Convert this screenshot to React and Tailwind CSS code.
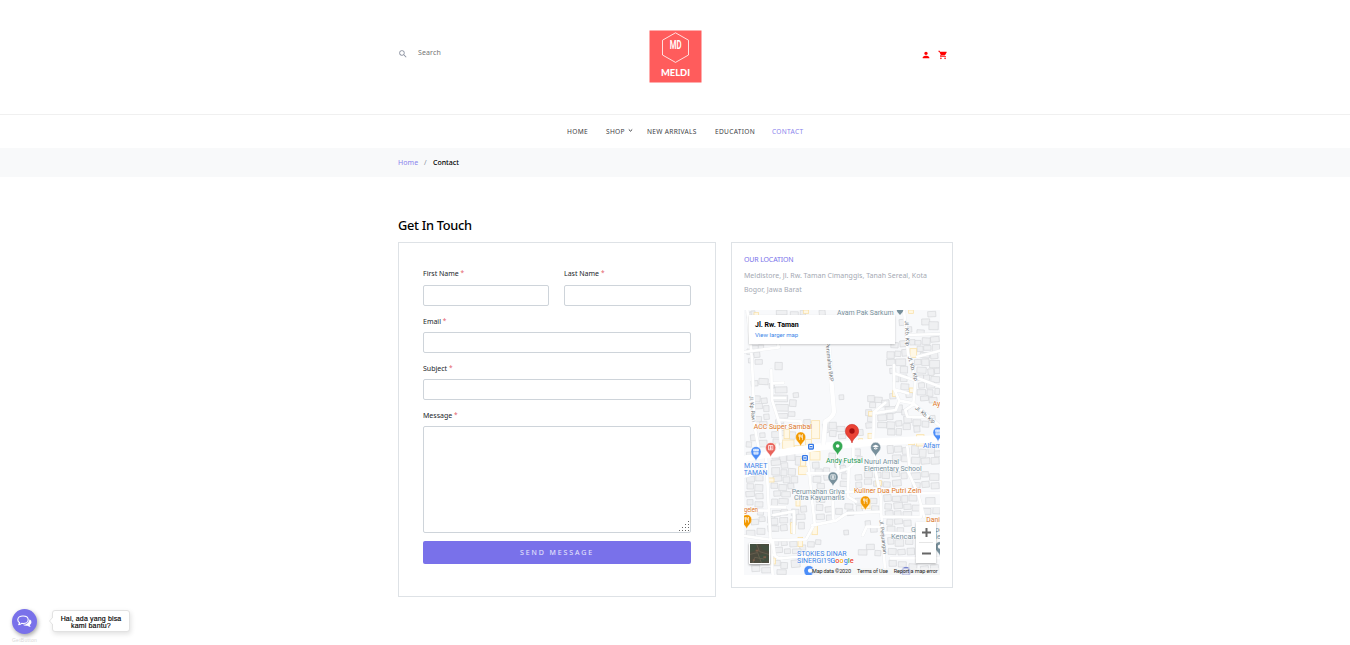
import React from "react";
import { MdSearch, MdPerson, MdShoppingCart } from "react-icons/md";

/* Building footprints: [x, y, width, height] */
const houses = [
  [8,8,14,16],[22,4,10,14],[98,2,30,12],[140,6,22,10],[170,2,14,12],[226,2,16,14],[552,6,22,14],[534,28,22,16],[556,36,26,22],[520,60,20,14],[466,30,18,16],[484,52,18,14],
  [24,108,18,14],[44,106,14,12],[10,118,22,14],[30,128,16,14],[14,146,12,12],[34,150,20,12],[94,158,20,20],
  [46,206,26,16],[22,214,18,14],[76,222,14,12],[94,232,34,16],[90,256,40,18],[30,258,18,16],[52,266,16,14],[34,282,20,14],[60,288,14,16],[96,284,36,18],[138,270,18,18],[148,250,14,12],
  [286,256,12,12],[102,312,28,12],[134,306,18,12],[34,320,18,14],[60,314,14,14],[48,336,20,12],[96,330,22,10],
  [430,126,20,18],[454,124,16,14],[474,120,18,18],[428,150,24,16],[456,148,28,18],[470,170,20,18],[442,98,20,14],[468,94,18,16],[438,176,16,14],[498,90,14,14],
  [514,92,16,12],[536,84,22,18],[560,82,24,14],[520,110,16,14],[540,108,20,12],[566,104,20,20],[530,128,26,14],[560,130,20,16],[512,150,18,14],[534,148,20,18],[558,152,28,20],[520,172,26,16],[552,178,16,18],[572,176,14,14],[514,196,24,14],[540,196,16,14],[562,200,24,16],[524,220,16,14],[548,218,22,16],[520,240,24,14],[550,240,16,18],[574,236,12,16],[530,260,22,12],[556,264,22,14],
  [372,258,18,16],[378,278,16,14],[394,262,20,14],[414,272,20,18],[438,252,16,14],[470,196,18,18],[448,198,16,16],[472,222,22,16],[486,246,18,16],[424,292,28,18],[456,286,18,20],[366,300,16,16],[372,320,16,14],[366,340,22,14],
  [402,316,24,16],[430,312,16,16],[402,338,26,14],[430,336,22,18],[456,334,16,14],[480,320,22,18],[478,342,20,16],[508,330,22,16],[536,334,18,16],[510,350,16,16],[554,318,18,18],[474,300,16,14],[432,358,20,16],[458,356,14,18],
  [236,344,14,24],[180,330,18,18],[256,338,20,18],[280,350,22,14],[258,362,18,16],[284,374,20,12],[340,360,16,16],[84,366,24,16],[112,362,20,14],[138,366,16,20],[20,376,18,16],[48,370,14,12],[46,392,22,18],[88,388,18,16],[8,396,14,14],
  [430,408,16,22],[452,410,20,16],[476,414,18,18],[504,408,18,24],[528,418,18,22],[552,410,18,20],[572,424,16,16],[446,436,24,14],[474,438,16,16],[504,442,24,18],[532,446,24,16],[562,444,22,18],[330,418,18,18],[340,440,14,14],[256,430,18,18],[272,456,26,16],
  [84,428,20,18],[108,434,18,20],[130,432,22,18],[156,440,16,24],[82,452,26,14],[112,460,18,14],[84,474,22,20],[112,480,16,16],[134,476,20,18],[88,500,24,14],[118,502,18,16],[142,500,18,18],[82,520,18,14],[106,524,22,16],[132,522,16,14],[90,544,18,14],[114,546,24,14],[84,568,16,18],[106,566,26,14],
  [8,428,12,16],[8,500,22,16],[36,496,20,16],[10,522,18,14],[34,524,22,18],[6,546,24,14],[36,552,20,14],[10,570,16,14],[34,576,22,14],[42,598,16,16],[22,630,20,14],[46,622,16,12],[8,662,24,18],[40,656,22,16],[72,620,20,18],[72,648,24,16],
  [206,458,18,16],[214,478,20,16],[208,500,22,16],[240,474,16,16],[240,496,14,14],[220,522,20,14],[290,468,14,18],[294,492,20,14],[290,514,26,14],[334,496,18,14],[336,518,16,14],[362,486,22,16],[392,488,18,14],[416,486,20,18],[444,486,22,14],[472,490,16,16],[362,508,20,14],[390,514,24,14],[420,516,18,14],[446,512,24,16],[502,490,26,18],[534,486,18,14],[558,492,26,18],[506,518,22,14],[534,516,20,16],[562,520,22,16],
  [86,602,22,16],[112,600,18,14],[144,598,20,18],[170,590,16,16],[82,626,18,18],[108,624,22,14],[140,628,16,16],[82,648,22,14],[110,646,18,16],[158,614,24,14],[164,638,16,18],[218,560,24,16],[218,584,18,16],[244,592,20,14],[218,614,22,14],[248,616,22,16],[276,596,18,16],[304,582,22,14],[310,602,18,14],[334,566,18,16],[338,588,16,16],[380,566,18,14],[384,588,20,12],
  [420,556,20,18],[446,560,22,14],[474,558,16,18],[496,556,22,16],[424,582,18,14],[450,580,24,16],[480,584,20,14],[546,564,26,20],[538,596,22,16],[568,592,20,18],[424,604,22,14],[452,604,18,16],[478,606,24,14],[506,586,20,16],[430,628,16,16],[452,628,22,14],[480,632,20,16],[430,650,22,16],[460,654,18,14],
  [86,690,18,14],[112,694,16,12],[138,696,20,14],[168,706,16,14],[192,696,18,14],[216,690,14,12],[92,714,22,14],[122,718,16,12],[146,718,24,12],[84,752,24,14],[112,758,18,16],[142,752,24,20],[24,768,22,16],[54,774,26,14],[100,780,26,12],[178,736,14,14],[364,634,14,16],[380,650,18,16],[368,704,22,14],[344,720,24,14],[394,722,16,14],[300,662,12,12],[432,684,16,18],[454,690,24,18],[486,686,20,16],[434,716,22,16],[462,720,20,14],[490,716,20,18],[436,752,20,16],[464,756,22,14],[496,762,22,14],[530,770,22,14],[560,766,22,16],
];

/* Commercial blocks shown in the warmer tone */
const shops = [[30,8,14,16],[178,0,16,10],[498,116,20,26],[494,0,14,10],[446,240,12,20],[496,234,16,14],[374,304,16,14],[203,332,24,54],[120,358,16,28],[116,390,34,26],[152,406,28,20],[184,388,18,18],[344,386,12,18],[372,370,14,16],[82,402,18,28],[198,424,30,26],[164,470,26,24],[170,446,14,22],[518,374,22,34],[494,388,18,16],[72,504,18,12],[396,512,16,14],[156,566,12,22],[140,638,14,32],[204,646,16,28],[162,682,14,28],[352,568,26,28],[78,744,16,18],[556,672,20,18],[26,700,20,12]];

const minorRoads = [
  "M10 0L24 150L32 350L42 405L45 438", "M0 126L105 112L102 104", "M82 180L84 270L108 345L110 395", "M84 220L118 218", "M88 264L124 264", "M108 330L170 334L172 398",
  "M252 96L264 235L270 306Q266 322 244 334L238 400", "M480 0L492 130L515 210L508 280", "M450 165L450 235L466 272L508 280L588 348", "M450 190L510 210", "M424 278L390 306L388 390", "M390 310L455 300L466 272",
  "M450 238L492 250", "M508 284L484 300L490 320L560 322", "M510 200L588 230", "M490 75L588 72", "M520 140L588 122",
  "M66 430L74 590L86 795", "M0 440L20 438", "M66 482L0 500", "M188 412L204 570L212 640L186 688L84 690L0 678", "M190 490L266 490L314 475L328 462V400", "M314 478L312 560L336 575", "M390 400L394 480L410 560L412 615L424 795",
  "M204 646L276 632L308 610L412 605", "M266 575L268 626", "M74 590L124 592M88 615L150 604V670", "M200 548L290 546L334 545", "M390 476L490 480L522 550L540 620", "M490 410L498 484", "M506 550L588 550", "M412 620L530 622V588H588", "M412 668L516 672", "M440 745H588", "M86 690L92 734Q98 748 122 744L185 738L206 795", "M20 720L86 735", "M356 676L368 650L410 650", "M280 420L282 490", "M0 600L72 602", "M390 538L508 538", "M100 404L102 432",
];

function Pin({ x, y, color, children, s = 1.08 }) {
  return (
    <g transform={`translate(${x} ${y}) scale(${s})`}>
      <path d="M0 26C-3 15-14 12-14 0A14 14 0 0 1 14 0C14 12 3 15 0 26Z" fill={color} stroke="#fff" strokeWidth="1.2" />
      {children}
    </g>
  );
}

const Fork = () => <path d="M-5-7V-2Q-5 1-3 1V8M-3-7V0M-1-7V-1Q-1 1-3 1M5 8V-7Q1-5 2 1H5" fill="none" stroke="#fff" strokeWidth="1.8" />;
const Shop = () => <path d="M-7-7H7V-2H-7ZM-6 0V7H6V0M-2-7V-2M3-7V-2" fill="#fff" fillOpacity=".65" stroke="#fff" strokeWidth="1.6" />;
const Civic = () => <path d="M-6-6H6V6H-6ZM-3-2H3M-3 2H3M0-6V6" fill="none" stroke="#fff" strokeWidth="2" />;

function T({ x, y, w, c = "#78909c", children, size = 20.5, ...rest }) {
  return (
    <text x={x} y={y} textLength={w} lengthAdjust="spacingAndGlyphs" fill={c} fontSize={size} fontWeight="400" stroke="#fff" strokeWidth="2.5" paintOrder="stroke" strokeLinejoin="round" {...rest}>
      {children}
    </text>
  );
}

function MapDrawing() {
  return (
    <svg viewBox="0 0 588 795" className="block h-[265px] w-[196px] font-['Roboto',sans-serif]">
      <rect width="588" height="795" fill="#f8f9fb" />
      <g fill="#eff0f2" stroke="#d5d7da" strokeWidth="2">
        {houses.map(([x, y, w, h], i) => (
          <rect key={i} x={x - 1} y={y - 1} width={w + 2} height={h + 2} transform={`rotate(${(i % 5) * 2 - 5} ${x} ${y})`} />
        ))}
      </g>
      <g fill="#fff8e6" stroke="#fae0a4" strokeWidth="2.2">
        {shops.map(([x, y, w, h], i) => (
          <rect key={i} x={x} y={y} width={w} height={h} />
        ))}
      </g>
      <g fill="none" strokeLinejoin="round" strokeLinecap="round">
        <path d={minorRoads.join("")} stroke="#e9ebed" strokeWidth="10" />
        <path d={minorRoads.join("")} stroke="#fff" strokeWidth="8" />
        <path d="M70 434L238 409L380 397L588 386" stroke="#fff" strokeWidth="22" />
        <path d="M0 447L70 434" stroke="#fff" strokeWidth="18" />
        <path d="M252 90L264 235L270 306Q266 322 244 334L238 400" stroke="#eceef0" strokeWidth="15" />
        <path d="M252 90L264 235L270 306Q266 322 244 334L238 404" stroke="#fff" strokeWidth="13" />
      </g>

      <T x="279" y="14" w="170">Ayam Pak Sarkum</T>
      <path d="M458 0H478Q478 7 468 15Q458 7 458 0" fill="#78909c" />
      <T x="0" y="0" w="76" size="16" c="#70757a" transform="translate(482 32) rotate(87)">Jl. Kb. Klp</T>
      <T x="0" y="0" w="76" size="16" c="#70757a" transform="translate(491 140) rotate(74)">Jl. Kb. Klp</T>
      <T x="0" y="0" w="72" size="16" c="#70757a" transform="translate(512 296) rotate(39)">Jl. Kb. Klp</T>
      <T x="0" y="0" w="78" size="16" c="#70757a" transform="translate(16 258) rotate(84)">Jl. Kp. Rawi</T>
      <T x="0" y="0" w="118" size="16" c="#70757a" transform="translate(245 98) rotate(84)">Perumahan BKP</T>
      <T x="0" y="0" w="102" size="16" c="#70757a" transform="translate(406 631) rotate(83)">Jl. Perjuangan</T>

      <Pin x="170" y="381" color="#f29900"><Fork /></Pin>
      <Pin x="80" y="413" color="#e9635b"><Civic /></Pin>
      <Pin x="36" y="425" color="#4b8df8"><Shop /></Pin>
      <Pin x="281" y="408" color="#34a853"><circle r="5" fill="#fff" /></Pin>
      <Pin x="395" y="412" color="#78909c"><path d="M-9-3L0-7L9-3L0 1ZM-5 1V4Q0 8 5 4V1L0 3Z" fill="#fff" /></Pin>
      <Pin x="267" y="501" color="#78909c"><Civic /></Pin>
      <Pin x="364" y="573" color="#f29900"><Fork /></Pin>
      <Pin x="8" y="629" color="#f29900"><Fork /></Pin>
      <Pin x="582" y="367" color="#4b8df8"><Shop /></Pin>
      <Pin x="588" y="710" color="#78909c"><circle r="6" fill="#fff" /></Pin>
      <Pin x="195" y="782" color="#4b8df8"><circle cx="3" r="6" fill="#fff" /></Pin>
      <Pin x="486" y="785" color="#6977c8"><Civic /></Pin>
      <g fill="#fff" stroke="#3579e8" strokeWidth="4">
        <rect x="194" y="403" width="14" height="14" rx="2" /><path d="M197 410H205" />
        <rect x="176" y="437" width="14" height="14" rx="2" /><path d="M179 444H187" />
      </g>
      <path d="M324 399C320 382 304 380 304 363A20 20 0 0 1 344 363C344 380 328 382 324 399Z" fill="#ea4335" stroke="#c5221f" strokeWidth="1.5" />
      <circle cx="324" cy="363" r="8" fill="#a50e0e" />

      <T x="29" y="357" w="175" c="#dc761f">ACC Super Sambal</T>
      <T x="566" y="289" c="#dc761f">Ayam</T>
      <T x="537" y="415" c="#4081e8">Alfamart</T>
      <T x="246" y="458" w="110" c="#239451">Andy Futsal</T>
      <T x="360" y="461" w="105">Nurul Amal</T>
      <T x="360" y="482" w="173">Elementary School</T>
      <T x="0" y="474" w="70" c="#4081e8">MARET</T>
      <T x="-1" y="494" w="71" c="#4081e8">TAMAN</T>
      <T x="143" y="551" w="159">Perumahan Griya</T>
      <T x="150" y="571" w="152">Citra Kayumanis</T>
      <T x="330" y="549" w="202" c="#dc761f">Kuliner Dua Putri Zein</T>
      <T x="0" y="605" w="42" c="#dc761f">gelen</T>
      <T x="547" y="637" c="#dc761f">Dania</T>
      <T x="501" y="666">Griya</T>
      <T x="441" y="686" w="86">Kencana</T>
      <T x="574" y="666">pe</T>
      <T x="574" y="686">le</T>
      <T x="159" y="739" w="149" c="#3c7fe5">STOKIES DINAR</T>
      <T x="159" y="760" w="102" c="#3c7fe5">SINERGI19</T>
      <text x="259" y="760" textLength="70" lengthAdjust="spacingAndGlyphs" fontSize="23" fontWeight="500" stroke="#fff" strokeWidth="3" paintOrder="stroke">
        <tspan fill="#4285f4">G</tspan><tspan fill="#ea4335">o</tspan><tspan fill="#f9ab00">o</tspan><tspan fill="#4285f4">g</tspan><tspan fill="#34a853">l</tspan><tspan fill="#ea4335">e</tspan>
      </text>
      <rect x="203" y="774" width="385" height="21" fill="#f5f5f5" fillOpacity=".6" />
      <g fill="#222" fontSize="16.5">
        <text x="204" y="789" textLength="117">Map data ©2020</text>
        <text x="339" y="789" textLength="93">Terms of Use</text>
        <text x="449" y="789" textLength="132">Report a map error</text>
      </g>
    </svg>
  );
}

function LocationMap() {
  return (
    <div className="relative mt-[13px] h-[265px] w-[196px] overflow-hidden font-['Roboto',sans-serif]">
      <MapDrawing />
      <div className="absolute left-[5px] top-[5px] h-[29px] w-[146px] bg-white pl-[6px] pt-[6px] shadow-[0_1px_2px_rgba(0,0,0,0.2)]">
        <div className="text-[7px] font-bold leading-[9px] text-black">Jl. Rw. Taman</div>
        <div className="mt-[1px] text-[6px] leading-[8px] text-[#3b86e8]">View larger map</div>
      </div>
      <div className="absolute left-[172px] top-[212px] h-[41px] w-[20px] bg-white shadow-[0_1px_2px_rgba(0,0,0,0.3)]">
        <svg viewBox="0 0 20 41" className="h-[41px] w-[20px]">
          <path d="M6 10.5H15M10.5 6V15M6 31.5H15" stroke="#666" strokeWidth="2" />
          <path d="M3 20.5H17" stroke="#e6e6e6" />
        </svg>
      </div>
      <svg viewBox="0 0 20 20" className="absolute left-[5px] top-[233px] h-[21px] w-[21px] border border-white bg-[#4c4b3e] shadow-[0_1px_2px_rgba(0,0,0,0.4)]">
        <path d="M0 0H8L5 7L0 9ZM11 0L20 2V8L13 6ZM8 12L18 10L20 17L11 20Z" fill="#435040" />
        <path d="M7 0L10 8L20 11M0 11L8 9L12 20M3 20L5 14L15 16" fill="none" stroke="#665f4e" strokeWidth="1" />
        <path d="M6 6H9V8H6ZM14 13H17V15H14ZM3 16H5V18H3Z" fill="#7a5c49" />
      </svg>
    </div>
  );
}

function Field({ label, labelClass = "", children }) {
  return (
    <label className="block min-w-0">
      <span className={`block h-[16px] text-[7px] leading-[10px] text-[#212529] ${labelClass}`}>
        {label} <span className="relative -top-px text-[6.5px] text-[#e4606d]">*</span>
      </span>
      {children}
    </label>
  );
}

const inputClass = "block h-[21px] w-full rounded-[2px] border border-[#ced4da] bg-white px-2 text-[7px] outline-none";

export default function App() {
  return (
    <div className="relative h-[645px] w-full overflow-hidden bg-white font-['Noto_Sans',sans-serif] text-black">
      <header>
        <div className="ml-[398px] flex h-[114px] w-[555px]">
          <div className="flex w-[251px] pt-[46px]">
            <MdSearch className="mt-[3px] size-[10px] text-[#8c92a0]" />
            <span className="ml-[10px] mt-[1px] text-[7px] leading-[12px] tracking-[0.12px] text-[#757575]">Search</span>
          </div>
          <svg viewBox="0 0 53 53" className="mt-[30px] h-[53px] w-[53px]">
            <rect x=".5" y=".5" width="52" height="52" fill="#ff5c5c" />
            <path d="M26.5 2.8L39.5 10.2V25L26.5 32.4L13.5 25V10.2Z" fill="none" stroke="#fff" strokeWidth=".8" />
            <text x="20.8" y="19" textLength="11.8" lengthAdjust="spacingAndGlyphs" fontSize="12" fontWeight="600" fill="#fff" fontFamily="Roboto, sans-serif">MD</text>
            <text x="12" y="46" textLength="29" lengthAdjust="spacingAndGlyphs" fontSize="9" fontWeight="900" fill="#fff" fontFamily="Lato, sans-serif">MELDI</text>
          </svg>
          <div className="ml-auto flex gap-[7px] pr-[5px] pt-[50px] text-[#f00]">
            <MdPerson className="size-[10px]" />
            <MdShoppingCart className="size-[10px]" />
          </div>
        </div>
        <nav className="flex h-[34px] border-t border-[#f0f0f0] pl-[567px] pt-[11px] text-[6.6px] leading-[11px] tracking-[0.3px] text-[#404145]">
          <a className="w-[39px]">HOME</a>
          <a className="flex w-[41px]">
            SHOP
            <svg viewBox="0 0 5 5" className="ml-[3px] mt-[2px] size-[5px]"><path d="M.8 1.5L2.5 3.1L4.2 1.5" fill="none" stroke="#25262a" strokeWidth=".9" /></svg>
          </a>
          <a className="w-[68px]">NEW ARRIVALS</a>
          <a className="w-[57px]">EDUCATION</a>
          <a className="text-[#8a83ed]">CONTACT</a>
        </nav>
      </header>

      <div className="flex h-[29px] items-center bg-[#f8f9fa] pl-[398px] text-[7px] leading-[10px]">
        <span className="w-[26px] tracking-[0.1px] text-[#8a83ed]">Home</span>
        <span className="w-[9px] text-[#8c92a0]">/</span>
        <strong className="font-medium">Contact</strong>
      </div>

      <main className="ml-[398px] w-[555px] pt-[39px]">
        <h2 className="h-[26px] text-[12.8px] font-medium leading-[19px] tracking-[-0.3px]">Get In Touch</h2>
        <div className="flex items-start gap-[15px]">
          <form className="h-[355px] w-[318px] border border-[#dee2e6] px-6 pt-[26px]">
            <div className="grid grid-cols-[126px_127px] gap-x-[15px]">
              <Field label="First Name"><input className={inputClass} /></Field>
              <Field label="Last Name"><input className={inputClass} /></Field>
            </div>
            <div className="mt-[10px] flex flex-col gap-[10px]">
              <Field label="Email" labelClass="pt-px"><input className={inputClass} /></Field>
              <Field label="Subject" labelClass="pt-px"><input className={inputClass} /></Field>
              <Field label="Message" labelClass="pt-px">
                <div className="relative">
                  <textarea className="block h-[107px] w-full resize-none rounded-[2px] border border-[#ced4da] bg-white outline-none" />
                  <svg viewBox="0 0 11 11" className="absolute bottom-[1px] right-px size-[11px]" fill="#666" shapeRendering="crispEdges">
                    <path d="M9 0h1v1h-1zM6 3h1v1h-1zM9 3h1v1h-1zM3 6h1v1h-1zM6 6h1v1h-1zM9 6h1v1h-1zM0 9h1v1h-1zM3 9h1v1h-1zM6 9h1v1h-1zM9 9h1v1h-1z" />
                  </svg>
                </div>
              </Field>
            </div>
            <button type="button" className="mt-[8px] block h-[23px] w-full rounded-[2px] bg-[#7971ea] text-[7px] leading-[23px] tracking-[1.9px] text-white/85">SEND MESSAGE</button>
          </form>

          <aside className="h-[346px] w-[222px] border border-[#dee2e6] px-3 pt-[11px]">
            <h3 className="text-[7px] leading-[11px] tracking-[-0.15px] text-[#7971ea]">OUR LOCATION</h3>
            <p className="mt-[4px] whitespace-nowrap text-[7px] leading-[14px] tracking-[0.01px] text-[#a5a9b3]">
              Meldistore, Jl. Rw. Taman Cimanggis, Tanah Sereal, Kota<br />Bogor, Jawa Barat
            </p>
            <LocationMap />
          </aside>
        </div>
      </main>

      <div className="absolute left-[11px] top-[608px] flex font-['Liberation_Sans',sans-serif]">
        <div className="flex w-[27px] flex-col items-center">
          <div className="mt-px flex size-[25px] items-center justify-center rounded-full bg-[#7971ea] shadow-[1px_2px_4px_rgba(0,0,0,0.35)]">
            <svg viewBox="0 0 15 13" className="-mt-px h-[13px] w-[15px]">
              <path d="M6 1C9 1 11.2 2.6 11.2 4.7S9 8.5 6 8.5L4.7 8.4Q3.4 9.6 1.7 9.8L2.6 7.7Q.8 6.5 .8 4.7C.8 2.6 3 1 6 1Z" fill="none" stroke="#fff" strokeWidth="1.1" strokeLinejoin="round" />
              <path d="M12.6 4.2Q15 5.6 14.4 7.7Q14 9 12.7 9.9L13.6 12Q11.8 11.8 10.4 10.7Q7.6 11.1 5.8 9.8Q11.6 9.6 12.6 4.2Z" fill="#fff" />
            </svg>
          </div>
          <span className="mt-[3px] text-[5px] leading-[6px] tracking-[0.3px] text-[#d8d8d8]">GetButton</span>
        </div>
        <div className="relative ml-[14px] mt-[2px] h-[22px] w-[78px] rounded-[3px] border border-[#e2e2e2] bg-white pt-[4px] text-center text-[7px] leading-[7px] tracking-[0.15px] text-black shadow-[1px_2px_5px_rgba(0,0,0,0.12)] [-webkit-text-stroke:0.15px_#000]">
          <svg viewBox="0 0 4 8" className="absolute -left-[4px] top-[6px] h-[8px] w-[4px]"><path d="M4 0L.5 4L4 8" fill="#fff" stroke="#e2e2e2" /></svg>
          Hai, ada yang bisa<br />kami bantu?
        </div>
      </div>
    </div>
  );
}
